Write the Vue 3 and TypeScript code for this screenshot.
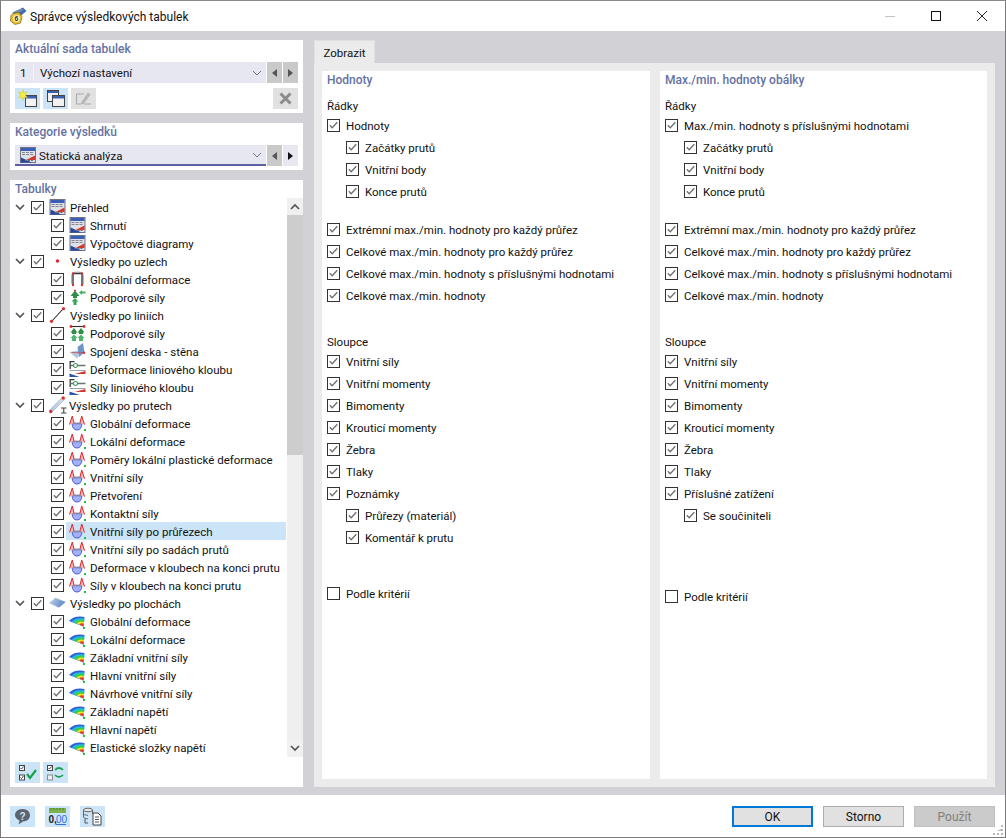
<script setup lang="ts">
type TreeRow = { label: string; icon: string; child: boolean; active?: boolean }
type Item = { label: string; type: 'label' | 'check'; sub?: boolean; off?: boolean; gap?: string }
type Column = { title: string; items: Item[] }

const row = (label: string, icon: string, child = true, active = false): TreeRow => ({ label, icon, child, active })

const tree: TreeRow[] = [
  row('Přehled', 'i-table', false),
  row('Shrnutí', 'i-table'),
  row('Výpočtové diagramy', 'i-table'),
  row('Výsledky po uzlech', 'i-node', false),
  row('Globální deformace', 'i-deform'),
  row('Podporové síly', 'i-support'),
  row('Výsledky po liniích', 'i-line', false),
  row('Podporové síly', 'i-linesup'),
  row('Spojení deska - stěna', 'i-plate'),
  row('Deformace liniového kloubu', 'i-hinge'),
  row('Síly liniového kloubu', 'i-hinge'),
  row('Výsledky po prutech', 'i-member', false),
  row('Globální deformace', 'i-bowl'),
  row('Lokální deformace', 'i-bowl'),
  row('Poměry lokální plastické deformace', 'i-bowl'),
  row('Vnitřní síly', 'i-bowl'),
  row('Přetvoření', 'i-bowl'),
  row('Kontaktní síly', 'i-bowl'),
  row('Vnitřní síly po průřezech', 'i-bowl', true, true),
  row('Vnitřní síly po sadách prutů', 'i-bowl'),
  row('Deformace v kloubech na konci prutu', 'i-bowl'),
  row('Síly v kloubech na konci prutu', 'i-bowl'),
  row('Výsledky po plochách', 'i-surface', false),
  row('Globální deformace', 'i-fan'),
  row('Lokální deformace', 'i-fan'),
  row('Základní vnitřní síly', 'i-fan'),
  row('Hlavní vnitřní síly', 'i-fan'),
  row('Návrhové vnitřní síly', 'i-fan'),
  row('Základní napětí', 'i-fan'),
  row('Hlavní napětí', 'i-fan'),
  row('Elastické složky napětí', 'i-fan')
]

const chk = (label: string, sub = false, gap = ''): Item => ({ label, type: 'check', sub, gap })
const extremes = (first: string): Item[] => [
  { label: 'Řádky', type: 'label' },
  chk(first),
  chk('Začátky prutů', true),
  chk('Vnitřní body', true),
  chk('Konce prutů', true),
  chk('Extrémní max./min. hodnoty pro každý průřez', false, 'gap-s'),
  chk('Celkové max./min. hodnoty pro každý průřez'),
  chk('Celkové max./min. hodnoty s příslušnými hodnotami'),
  chk('Celkové max./min. hodnoty'),
  { label: 'Sloupce', type: 'label', gap: 'gap-m' },
  chk('Vnitřní síly'),
  chk('Vnitřní momenty'),
  chk('Bimomenty'),
  chk('Krouticí momenty'),
  chk('Žebra'),
  chk('Tlaky')
]

const columns: Column[] = [
  {
    title: 'Hodnoty',
    items: [
      ...extremes('Hodnoty'),
      chk('Poznámky'),
      chk('Průřezy (materiál)', true),
      chk('Komentář k prutu', true),
      { label: 'Podle kritérií', type: 'check', off: true, gap: 'gap-l' }
    ]
  },
  {
    title: 'Max./min. hodnoty obálky',
    items: [
      ...extremes('Max./min. hodnoty s příslušnými hodnotami'),
      chk('Příslušné zatížení'),
      chk('Se součiniteli', true),
      { label: 'Podle kritérií', type: 'check', off: true, gap: 'gap-xl' }
    ]
  }
]
</script>

<template>
  <div class="window">
    <svg class="defs" width="0" height="0" aria-hidden="true">
      <defs>
        <linearGradient id="g-surface" x1="0" y1="0" x2="1" y2="0.4">
          <stop offset="0" stop-color="#c5d3e6" />
          <stop offset="1" stop-color="#5b8ccb" />
        </linearGradient>
        <linearGradient id="g-beam" x1="0" y1="1" x2="1" y2="0">
          <stop offset="0" stop-color="#a9c3e4" />
          <stop offset="1" stop-color="#d9e1ea" />
        </linearGradient>
      </defs>
      <symbol id="i-check" viewBox="0 0 11 11">
        <path d="M1.800 5.300 4.200 7.800 9.300 2.200" fill="none" stroke="#6e6e6e" stroke-width="1.300" />
      </symbol>
      <symbol id="i-table" viewBox="0 0 16 16">
        <rect x="0.500" y="0.500" width="15" height="15" fill="#dfe1e8" stroke="#6f7384" />
        <rect x="1" y="1" width="14" height="3" fill="#3b5fb5" />
        <path d="M2 5.500h12M2 7.500h12" stroke="#83868f" stroke-width="1" stroke-dasharray="3 1" />
        <path d="M15 8.500V13H6z" fill="#cf3a2e" />
        <path d="M1 15.500V10.500l11 5z" fill="#24479f" />
        <path d="M5 13.500h9" stroke="#6b6e78" stroke-dasharray="2 1" />
      </symbol>
      <symbol id="i-node" viewBox="0 0 16 16">
        <circle cx="8" cy="8" r="1.700" fill="#e0242b" />
      </symbol>
      <symbol id="i-deform" viewBox="0 0 16 16">
        <path d="M2 13V5Q2 1 8 1t6 4v8" fill="none" stroke="#b4b4b4" stroke-width="1" />
        <path d="M3.500 13.500V2.500h9v11" fill="none" stroke="#38393d" stroke-width="1.400" />
        <circle cx="3.500" cy="2.500" r="1.200" fill="#d9323a" /><circle cx="12.500" cy="2.500" r="1.200" fill="#d9323a" />
        <circle cx="3.500" cy="14" r="1.200" fill="#d9323a" /><circle cx="12.500" cy="14" r="1.200" fill="#d9323a" />
      </symbol>
      <symbol id="i-support" viewBox="0 0 16 16">
        <path d="M5.500 1.500 10 7H7.500v2h-4V7H1z" fill="#2f8f46" />
        <path d="M5.500 9 9 12.500H7V16H4v-3.500H2z" fill="#37a653" />
        <path d="M9.500 3.500 12.500 1v1.500h3.500v2h-3.500V6z" fill="#45b062" />
        <circle cx="5.500" cy="1.500" r="1" fill="#d9323a" />
      </symbol>
      <symbol id="i-line" viewBox="0 0 16 16">
        <path d="M2 14.500 14 1.500" stroke="#2c2c2c" stroke-width="1.100" />
        <circle cx="2" cy="14.300" r="1.600" fill="#dd2c33" /><circle cx="14" cy="1.700" r="1.600" fill="#dd2c33" />
      </symbol>
      <symbol id="i-linesup" viewBox="0 0 16 16">
        <path d="M1 1.500h14" stroke="#2c2c2c" stroke-width="1.100" />
        <circle cx="1.500" cy="1.500" r="1.400" fill="#dd2c33" /><circle cx="14.500" cy="1.500" r="1.400" fill="#dd2c33" />
        <path d="M4.500 3 8 7.500H6.500V9h-4V7.500H1zM11.500 3 15 7.500H13.500V9h-4V7.500H8z" fill="#2f8f46" />
        <path d="M4.500 9.500 8 13H6.500v3h-4v-3H1zM11.500 9.500 15 13H13.500v3h-4v-3H8z" fill="#4db56c" />
      </symbol>
      <symbol id="i-plate" viewBox="0 0 16 16">
        <path d="M0 9 9 7.500 9 13.500 7.500 15.500z" fill="#b3c5dc" />
        <path d="M8 4 13.500 0 15 9.500 9.500 14z" fill="#6f94c9" />
        <path d="M2 9.500 14.500 9.800" stroke="#c9474d" stroke-width="0.800" />
        <circle cx="14.500" cy="9.800" r="1.200" fill="#dd2c33" />
      </symbol>
      <symbol id="i-hinge" viewBox="0 0 16 16">
        <path d="M0.700 0V8M0 0.700h5" stroke="#34373c" stroke-width="1.300" />
        <path d="M1 4.500h3M8 4.500h8" stroke="#66786f" stroke-width="1.400" />
        <circle cx="6" cy="4.500" r="2" fill="#fff" stroke="#3f9a66" stroke-width="1.200" />
        <path d="M0 9.500h16" stroke="#a0a4aa" stroke-width="1" />
        <path d="M16 10V13H5z" fill="#d5372e" />
        <path d="M0 16V12.500L10 16z" fill="#2c56ac" />
      </symbol>
      <symbol id="i-member" viewBox="0 0 20 18">
        <path d="M0.800 14 13 1.500l2.500 2L3 16z" fill="url(#g-beam)" stroke="#8ea6c4" stroke-width="0.600" />
        <circle cx="1.700" cy="15.500" r="1.700" fill="#dd2c33" /><circle cx="14.200" cy="2" r="1.700" fill="#dd2c33" />
        <path d="M12 12h5.500M14.750 12v5M12 17h5.500" stroke="#45464a" stroke-width="1.100" fill="none" />
      </symbol>
      <symbol id="i-bowl" viewBox="0 0 17 16">
        <path d="M3 8.500H13Q12.500 15 8 15T3 8.500z" fill="#a3b0fa" stroke="#3f4bc9" stroke-width="0.900" />
        <path d="M3 8.500h10" stroke="#7f88a8" stroke-width="1.800" />
        <path d="M0.500 9.500 3.300 1 5 8M11 8 12.700 1 15.500 9.500" fill="#f4b9b4" stroke="#e0262e" stroke-width="1" />
        <rect x="15" y="14" width="2" height="2" fill="#22c13c" />
      </symbol>
      <symbol id="i-surface" viewBox="0 0 16 16">
        <path d="M0 8 6 3 16 7 9.500 12.500z" fill="url(#g-surface)" stroke="#8ea6c4" stroke-width="0.300" />
      </symbol>
      <symbol id="i-fan" viewBox="0 0 17 16">
        <path d="M14.500 13.500 0 8A14 9 0 0 1 15.500 4Z" fill="#2f62d8" />
        <path d="M14.500 13.500 2.800 8.600A11.200 7.200 0 0 1 15.400 5.500Z" fill="#22c0e0" />
        <path d="M14.500 13.500 5 9.300A8.400 5.400 0 0 1 15.200 7Z" fill="#34cc4e" />
        <path d="M14.500 13.500 7.500 10.300A5.800 3.800 0 0 1 15 9Z" fill="#f0e020" />
        <path d="M14.500 13.500 10.500 11.500A3 2 0 0 1 14.800 10.800Z" fill="#e8352a" />
        <rect x="14" y="14" width="2" height="2" fill="#22c13c" />
      </symbol>
    </svg>

    <header class="titlebar">
      <svg class="app-icon" viewBox="0 0 18 18">
        <path d="M3 6 14 0.500l3.500 3.500-6 5z" fill="#3f6fb0" />
        <path d="M5 4.500 13 1.500l1.500 1.500-8 3.500z" fill="#7d8ea8" />
        <path d="M4 6.500 10 5.500l3 4-1.500 6.500L6 17.500 1.500 14 2 8.500z" fill="#e9be2f" stroke="#7e6312" stroke-width="0.700" />
        <circle cx="7.500" cy="11.500" r="3.400" fill="#fff2b8" />
        <text x="7.500" y="14.300" text-anchor="middle" class="app-six">6</text>
      </svg>
      <span class="title">Správce výsledkových tabulek</span>
      <div class="win-controls">
        <svg viewBox="0 0 46 30" class="win-btn"><path d="M18 15.500h10" stroke="#c4c4c4" /></svg>
        <svg viewBox="0 0 46 30" class="win-btn"><rect x="18.500" y="10.500" width="9" height="9" fill="none" stroke="#111" /></svg>
        <svg viewBox="0 0 46 30" class="win-btn"><path d="M18 10l10 10M28 10 18 20" stroke="#222" /></svg>
      </div>
    </header>

    <main class="body">
      <aside class="left">
        <section class="card card-set">
          <h3 class="card-title">Aktuální sada tabulek</h3>
          <div class="combo-row">
            <div class="combo">
              <span class="combo-num">1</span>
              <span class="combo-text">Výchozí nastavení</span>
              <svg class="chev" viewBox="0 0 10 6"><path d="M1 1l4 4 4-4" fill="none" stroke="#777" stroke-width="1" /></svg>
            </div>
            <button class="nav"><span class="tri tri-l"></span></button>
            <button class="nav"><span class="tri tri-r"></span></button>
          </div>
          <div class="tool-row">
            <button class="tool">
              <svg viewBox="0 0 25 21" class="tool-svg">
                <rect x="10.500" y="7.500" width="11" height="11" fill="#f2f2f2" stroke="#444" />
                <rect x="11" y="8" width="10" height="2.500" fill="#3d62b4" />
                <path d="M8 1.500 9.200 5 12.500 4 10.500 7 12.500 10 9.200 9 8 12.500 6.800 9 3.500 10 5.500 7 3.500 4 6.800 5z" fill="#f4ee3a" stroke="#c9b92a" stroke-width="0.400" />
              </svg>
            </button>
            <button class="tool">
              <svg viewBox="0 0 25 21" class="tool-svg">
                <rect x="4.500" y="2.500" width="11" height="11" fill="#f2f2f2" stroke="#444" />
                <rect x="5" y="3" width="10" height="2" fill="#3d62b4" />
                <rect x="9.500" y="7.500" width="12" height="11" fill="#f2f2f2" stroke="#444" />
                <rect x="10" y="8" width="11" height="2.500" fill="#3d62b4" />
              </svg>
            </button>
            <button class="tool tool-off">
              <svg viewBox="0 0 25 21" class="tool-svg">
                <path d="M13 6H5.500v10H10M13 16h7" fill="none" stroke="#a9a9a9" />
                <path d="M11 14 17 5l2 1.500-6 8.500-2.500 1z" fill="#bbb" stroke="#999" stroke-width="0.500" />
              </svg>
            </button>
            <button class="tool tool-off tool-x">
              <svg viewBox="0 0 25 21" class="tool-svg">
                <path d="M7.500 5.500l10 10M17.500 5.500l-10 10" stroke="#8b8b8b" stroke-width="3" />
              </svg>
            </button>
          </div>
        </section>

        <section class="card card-cat">
          <h3 class="card-title">Kategorie výsledků</h3>
          <div class="combo-row">
            <div class="combo combo-line">
              <svg class="combo-icon"><use href="#i-table" /></svg>
              <span class="combo-text">Statická analýza</span>
              <svg class="chev" viewBox="0 0 10 6"><path d="M1 1l4 4 4-4" fill="none" stroke="#777" stroke-width="1" /></svg>
            </div>
            <button class="nav"><span class="tri tri-l"></span></button>
            <button class="nav nav-on"><span class="tri tri-r tri-dark"></span></button>
          </div>
        </section>

        <section class="card card-tree">
          <h3 class="card-title">Tabulky</h3>
          <div class="tree-wrap">
            <ul class="tree">
              <li v-for="(r, i) in tree" :key="i" class="tree-row" :class="{ child: r.child }">
                <svg v-if="!r.child" class="twist" viewBox="0 0 10 7"><path d="M1 1l4 4 4-4" fill="none" stroke="#555" stroke-width="1.700" /></svg>
                <span class="box"><svg class="tick"><use href="#i-check" /></svg></span>
                <span class="tree-main" :class="{ active: r.active }">
                  <svg class="ico" :class="{ wide: r.icon === 'i-member' }"><use :href="'#' + r.icon" /></svg>
                  <span class="tree-label">{{ r.label }}</span>
                </span>
              </li>
            </ul>
            <div class="scrollbar">
              <div class="sb-btn"><svg viewBox="0 0 10 7" class="sb-arrow"><path d="M1 6l4-4 4 4" fill="none" stroke="#555" stroke-width="1.700" /></svg></div>
              <div class="sb-track"><div class="sb-thumb"></div></div>
              <div class="sb-btn"><svg viewBox="0 0 10 7" class="sb-arrow"><path d="M1 1l4 4 4-4" fill="none" stroke="#555" stroke-width="1.700" /></svg></div>
            </div>
          </div>
          <div class="tool-row tree-tools">
            <button class="tool">
              <svg viewBox="0 0 25 21" class="tool-svg">
                <rect x="4.500" y="3.500" width="5" height="5" fill="#fff" stroke="#444" />
                <rect x="4.500" y="13" width="5" height="5" fill="#fff" stroke="#444" />
                <path d="M5.500 6l1 1 2-2.500M5.500 15.500l1 1 2-2.500" fill="none" stroke="#444" />
                <path d="M12 12l3 4 6-8" fill="none" stroke="#17a34a" stroke-width="2.200" />
              </svg>
            </button>
            <button class="tool">
              <svg viewBox="0 0 25 21" class="tool-svg">
                <rect x="4.500" y="3.500" width="5" height="5" fill="#fff" stroke="#444" />
                <rect x="4.500" y="13" width="5" height="5" fill="#eef" stroke="#8a8a8a" />
                <path d="M5.500 6l1 1 2-2.500" fill="none" stroke="#444" />
                <path d="M12 8c3-3 6-2 8 0M20 13c-3 3-6 2-8 0" fill="none" stroke="#17a34a" stroke-width="1.700" />
              </svg>
            </button>
          </div>
        </section>
      </aside>

      <section class="right">
        <div class="tabs"><div class="tab">Zobrazit</div></div>
        <div class="tab-panel">
          <div v-for="col in columns" :key="col.title" class="col">
            <h3 class="col-title">{{ col.title }}</h3>
            <template v-for="(it, n) in col.items" :key="n">
              <div v-if="it.type === 'label'" class="col-label" :class="it.gap">{{ it.label }}</div>
              <div v-else class="opt" :class="[it.gap, { sub: it.sub }]">
                <span class="box"><svg v-if="!it.off" class="tick"><use href="#i-check" /></svg></span>
                <span class="opt-text">{{ it.label }}</span>
              </div>
            </template>
          </div>
        </div>
      </section>
    </main>

    <footer class="footer">
      <button class="foot-tool">
        <svg viewBox="0 0 25 21" class="tool-svg">
          <path d="M12.500 3c4.500 0 7.500 2.800 7.500 6.300 0 3.600-3 6.200-7 6.200l-4.500 3 1-3.800C7 13.200 5 11.500 5 9.300 5 5.800 8 3 12.500 3z" fill="#5b6470" />
          <text x="12.500" y="13.500" text-anchor="middle" class="q-mark">?</text>
        </svg>
      </button>
      <button class="foot-tool">
        <svg viewBox="0 0 25 21" class="tool-svg">
          <rect x="4" y="2" width="17" height="5" fill="#7eb24f" />
          <path d="M6 2v2M9 2v2M12 2v2M15 2v2M18 2v2" stroke="#4f7d2c" />
          <text x="3.500" y="17" class="num-k">0,</text>
          <text x="11" y="17" class="num-b">00</text>
          <path d="M11 18.500h10" stroke="#2f6fe0" />
        </svg>
      </button>
      <button class="foot-tool">
        <svg viewBox="0 0 25 21" class="tool-svg">
          <ellipse cx="8" cy="4" rx="4.500" ry="1.800" fill="#e7e7e7" stroke="#666" />
          <path d="M3.500 4v7c0 1.100 2 1.800 4.500 1.800M12.500 4v4M3.500 7.500c0 1.100 2 1.800 4.500 1.800" fill="none" stroke="#666" />
          <path d="M5 13v4h3" fill="none" stroke="#555" />
          <path d="M13 7h5l3 3v9h-8z" fill="#fff" stroke="#444" />
          <path d="M15 11h4M15 13.500h4M15 16h4" stroke="#555" />
        </svg>
      </button>
      <div class="foot-spacer"></div>
      <button class="btn btn-primary">OK</button>
      <button class="btn">Storno</button>
      <button class="btn btn-off">Použít</button>
      <svg class="grip" viewBox="0 0 11 11">
        <path d="M8 8h2v2H8zM4 8h2v2H4zM0 8h2v2H0zM8 4h2v2H4zM8 0h2v2H8z" fill="#b8b8b8" />
      </svg>
    </footer>
  </div>
</template>

<style scoped>
.window {
  width: 1006px;
  height: 838px;
  box-sizing: border-box;
  border: 1px solid #7b7b7b;
  border-top-color: #8a8a8a;
  background: #fff;
  display: flex;
  flex-direction: column;
  font-family: Roboto, "Open Sans", sans-serif;
  font-size: 11.5px;
  color: #111;
  overflow: hidden;
  position: relative;
}
.defs { position: absolute; }
button { font: inherit; padding: 0; margin: 0; border: 0; cursor: default; }
h3 { margin: 0; }
ul { list-style: none; margin: 0; padding: 0; }

.titlebar { height: 30px; display: flex; align-items: center; flex: none; }
.app-icon { width: 18px; height: 18px; margin-left: 8px; }
.app-six { font: bold 7px "Liberation Sans", sans-serif; fill: #333; }
.title { margin-left: 3px; padding-top: 1px; font-size: 12px; color: #111; }
.win-controls { margin-left: auto; display: flex; }
.win-btn { width: 46px; height: 30px; }

.body {
  flex: 1;
  min-height: 0;
  background: #d1d1d6;
  padding: 9px 10px 8px 9px;
  display: flex;
  gap: 10px;
}
.left { width: 293px; flex: none; display: flex; flex-direction: column; gap: 10px; }
.card { background: #fff; padding: 0 5px; box-sizing: border-box; }
.card-set { height: 73px; }
.card-cat { height: 47px; }
.card-tree { flex: 1; min-height: 0; display: flex; flex-direction: column; }
.card-title {
  height: 22px;
  line-height: 19px;
  font-size: 12px;
  font-weight: 500;
  color: #6472a3;
  padding-top: 0;
}
.combo-row { display: flex; gap: 1px; height: 21px; }
.combo {
  width: 251px;
  background: #e6e7f1;
  display: flex;
  align-items: center;
  box-sizing: border-box;
  padding: 0 4px 0 0;
}
.combo-line { border-bottom: 2px solid #5d5fa3; }
.combo-num { width: 19px; padding: 1px 0 0 5px; box-sizing: border-box; border-right: 1px solid #f4f4f8; line-height: 15px; }
.combo-text { margin-left: 6px; padding-top: 1px; flex: 1; }
.combo-line .combo-text { margin-left: 3px; padding-top: 2px; }
.combo-icon { width: 16px; height: 16px; margin-left: 5px; }
.chev { width: 10px; height: 6px; }
.nav { width: 15px; background: #c9c9c9; display: flex; align-items: center; justify-content: center; }
.nav-on { background: #e6e7f1; }
.tri { width: 0; height: 0; border-top: 4px solid transparent; border-bottom: 4px solid transparent; }
.tri-l { border-right: 5px solid #555; }
.tri-r { border-left: 5px solid #555; }
.tri-dark { border-left-color: #111; }

.tool-row { display: flex; gap: 3px; margin-top: 5px; }
.tool { width: 25px; height: 21px; background: #cce4f7; display: block; }
.tool-off { background: #e1e1e1; }
.tool-x { margin-left: auto; }
.tool-svg { width: 25px; height: 21px; display: block; }

.tree-wrap { display: flex; height: 559px; margin-right: -5px; overflow: hidden; margin-top: -4px; }
.tree { width: 272px; flex: none; overflow: hidden; }
.tree-row { height: 18px; display: flex; align-items: center; position: relative; padding-left: 16px; }
.tree-row.child { padding-left: 36px; }
.twist { width: 10px; height: 7px; position: absolute; left: 0; top: 6px; }
.box {
  width: 13px;
  height: 13px;
  box-sizing: border-box;
  border: 1px solid #333;
  background: #fff;
  flex: none;
  display: block;
}
.tick { width: 11px; height: 11px; display: block; }
.tree-main { display: flex; align-items: center; height: 18px; flex: 1; min-width: 0; margin: 0 1px 0 2px; padding-left: 3px; }
.active { background: #cce4f7; }
.ico { width: 17px; height: 16px; flex: none; }
.ico.wide { width: 20px; height: 18px; margin-right: -4px; }
.tree-label { margin-left: 4px; padding-top: 2px; white-space: nowrap; }

.scrollbar { width: 16px; flex: none; display: flex; flex-direction: column; background: #efefef; }
.sb-btn { height: 17px; background: #f0f0f0; display: flex; align-items: center; justify-content: center; }
.sb-arrow { width: 10px; height: 7px; }
.sb-track { flex: 1; }
.sb-thumb { height: 240px; background: #cdcdcd; }
.tree-tools { margin-top: 5px; }

.right { flex: 1; min-width: 0; display: flex; flex-direction: column; }
.tabs { display: flex; height: 23px; padding-left: 1px; flex: none; }
.tab {
  width: 61px;
  background: #ebebeb;
  line-height: 25px;
  text-align: center;
  border: 1px solid #e0e0e4;
  border-bottom: 0;
  box-sizing: border-box;
}
.tab-panel {
  flex: 1;
  margin-left: 1px;
  background: #ebebeb;
  padding: 8px;
  display: flex;
  gap: 10px;
}
.col { flex: 1; background: #fff; padding-left: 5px; }
.col:first-child { flex: none; width: 328px; box-sizing: border-box; }
.col-title { height: 23px; line-height: 18px; font-size: 12px; font-weight: 500; color: #6472a3; }
.col-label { height: 21px; line-height: 24px; }
.opt { height: 22px; display: flex; align-items: center; gap: 6px; white-space: nowrap; }
.opt .box { margin-top: -1px; }
.opt.sub { padding-left: 19px; }
.gap-s { margin-top: 16px; }
.gap-m { margin-top: 23px; }
.gap-l { margin-top: 34px; }
.gap-xl { margin-top: 59px; }

.footer { height: 42px; flex: none; display: flex; align-items: center; position: relative; padding: 0 10px 0 9px; }
.foot-tool { width: 25px; height: 21px; background: #cce4f7; margin-right: 10px; display: block; }
.foot-spacer { flex: 1; }
.q-mark { font: bold 10px "Liberation Sans", sans-serif; fill: #cce4f7; }
.num-k { font: bold 10px "Liberation Sans", sans-serif; fill: #222; }
.num-b { font: 10px "Liberation Sans", sans-serif; fill: #2f6fe0; }
.btn {
  width: 81px;
  height: 21px;
  margin-left: 10px;
  padding-top: 1px;
  background: #e1e1e1;
  border: 1px solid #adadad;
  box-sizing: border-box;
  color: #111;
  text-align: center;
  font-size: 12px;
}
.btn-primary { border: 2px solid #0078d7; }
.btn-off { background: #cbcbcb; border-color: #bfbfbf; color: #808080; }
.grip { position: absolute; right: 1px; bottom: 1px; width: 11px; height: 11px; }
</style>
